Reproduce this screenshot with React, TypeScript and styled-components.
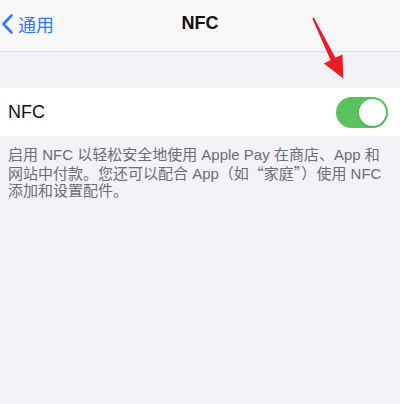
import * as React from 'react';
import styled, { createGlobalStyle } from 'styled-components';

const GlobalStyle = createGlobalStyle`
  html, body {
    margin: 0;
    padding: 0;
    background: #f2f2f7;
  }
  body {
    font-family: "Inter", "Noto Sans CJK SC", sans-serif;
    -webkit-font-smoothing: antialiased;
  }
`;

//#region styled
const Screen = styled.div`
  position: relative;
  width: 400px;
  height: 404px;
  overflow: hidden;
  background: #f2f2f7;
`;

const NavBar = styled.div`
  height: 52px;
  display: grid;
  grid-template-columns: 1fr auto 1fr;
  align-items: center;
  background: #f8f8f9;
  border-bottom: 1px solid #dcdce0;
  box-sizing: border-box;
`;

const BackButton = styled.div`
  display: flex;
  align-items: center;
  gap: 4px;
  padding-left: 1px;
  color: #3478f6;
  font-size: 18px;
  font-family: "Noto Sans CJK SC", sans-serif;
  margin-top: -3px;
`;

const Title = styled.div`
  font-size: 18px;
  font-weight: 700;
  color: #111;
  font-family: "Liberation Sans", "Noto Sans CJK SC", sans-serif;
  margin-top: -4px;
`;

const Gap = styled.div`
  height: 36px;
`;

const Cell = styled.div`
  height: 48px;
  display: flex;
  align-items: center;
  justify-content: space-between;
  padding: 0 12px 0 8px;
  background: #ffffff;
`;

const CellLabel = styled.div`
  font-size: 18px;
  color: #111;
  font-family: "Liberation Sans", sans-serif;
  margin-top: 1px;
`;

const Switch = styled.div<{ $on: boolean }>`
  position: relative;
  width: 52px;
  height: 31px;
  border-radius: 16px;
  background: ${p => (p.$on ? '#5ac35f' : '#e5e5ea')};
  margin-top: 1px;
  &::after {
    content: '';
    position: absolute;
    top: 2px;
    left: ${p => (p.$on ? '23px' : '2px')};
    width: 27px;
    height: 27px;
    border-radius: 50%;
    background: #fff;
    box-shadow: 0 1px 3px rgba(0, 0, 0, 0.18);
  }
`;

const Footer = styled.div`
  padding: 10px 14px 0 8px;
  font-size: 15px;
  line-height: 17.6px;
  color: #6d6d72;
  font-family: "Liberation Sans", "Noto Sans CJK SC", sans-serif;
`;

const Line = styled.div`
  white-space: nowrap;
`;

// full-width quotes come from the CJK face, as on the phone
const Cjk = styled.span`
  font-family: "Noto Sans CJK SC", sans-serif;
`;

const Arrow = styled.svg`
  position: absolute;
  left: 0;
  top: 0;
  pointer-events: none;
`;
//#endregion

export default function App() {
  return (
    <Screen>
      <GlobalStyle />
      <NavBar>
        <BackButton>
          <svg width="13" height="20" viewBox="0 0 13 20">
            <path d="M10.5 1.5 L2.5 10 L10.5 18.5" fill="none" stroke="#3478f6" strokeWidth="2.6" strokeLinecap="round" strokeLinejoin="round" />
          </svg>
          通用
        </BackButton>
        <Title>NFC</Title>
        <div />
      </NavBar>
      <Gap />
      <Cell>
        <CellLabel>NFC</CellLabel>
        <Switch $on={true} />
      </Cell>
      <Footer>
        <Line>启用 NFC 以轻松安全地使用 Apple Pay 在商店、App 和</Line>
        <Line>网站中付款。您还可以配合 App<Cjk>（如“家庭”）</Cjk>使用 NFC</Line>
        <Line>添加和设置配件。</Line>
      </Footer>
      <Arrow width="400" height="404" viewBox="0 0 400 404">
        <polygon
          points="312.3,18.4 313.9,17.6 335.4,57.8 342.5,54.6 343.4,78.5 323.8,63.4 330.6,60.2"
          fill="#ec1c24"
        />
      </Arrow>
    </Screen>
  );
}
